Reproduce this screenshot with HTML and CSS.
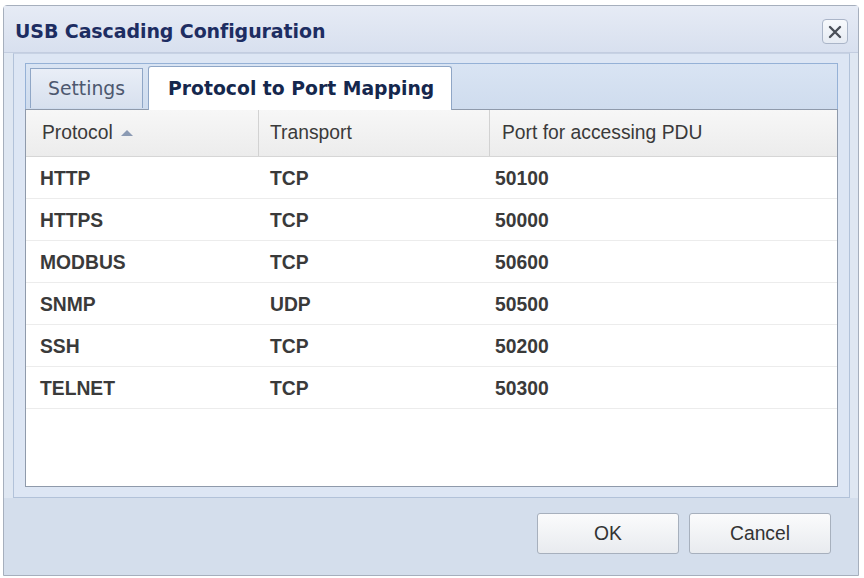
FILE: index.html
```html
<!DOCTYPE html>
<html>
<head>
<meta charset="utf-8">
<link rel="stylesheet" href="styles.css">
</head>
<body>
<div class="window">
  <div class="titlebar">
    <span class="title">USB Cascading Configuration</span>
    <span class="close"><svg width="16" height="16" viewBox="0 0 16 16"><path d="M3 3 L13 13 M13 3 L3 13" stroke="#4a4f58" stroke-width="2.4" stroke-linecap="round"/></svg></span>
  </div>
  <div class="body">
    <div class="panel">
      <div class="tabstrip">
        <div class="tab">Settings</div>
        <div class="tab active">Protocol to Port Mapping</div>
      </div>
      <div class="grid">
        <div class="row head">
          <div class="c c1">Protocol <span class="arrow"></span></div>
          <div class="c c2">Transport</div>
          <div class="c c3">Port for accessing PDU</div>
        </div>
        <div class="row"><div class="c c1">HTTP</div><div class="c c2">TCP</div><div class="c c3">50100</div></div>
        <div class="row"><div class="c c1">HTTPS</div><div class="c c2">TCP</div><div class="c c3">50000</div></div>
        <div class="row"><div class="c c1">MODBUS</div><div class="c c2">TCP</div><div class="c c3">50600</div></div>
        <div class="row"><div class="c c1">SNMP</div><div class="c c2">UDP</div><div class="c c3">50500</div></div>
        <div class="row"><div class="c c1">SSH</div><div class="c c2">TCP</div><div class="c c3">50200</div></div>
        <div class="row"><div class="c c1">TELNET</div><div class="c c2">TCP</div><div class="c c3">50300</div></div>
      </div>
    </div>
    <div class="footer">
      <button class="btn">OK</button>
      <button class="btn">Cancel</button>
    </div>
  </div>
</div>
</body>
</html>
```
FILE: styles.css
```css
html, body { margin: 0; padding: 0; background: #ffffff; }
body { width: 864px; height: 578px; overflow: hidden; }
.window {
  margin: 5px 3px 0 3px;
  width: 856px;
  height: 571px;
  border: 1px solid #a6afbd;
  border-radius: 4px 4px 0 0;
  background: #dfe7f2;
  display: flex;
  flex-direction: column;
  box-sizing: border-box;
}
.titlebar {
  height: 47px;
  flex: none;
  display: flex;
  align-items: center;
  justify-content: space-between;
  padding: 0 10px 0 11px;
  background: linear-gradient(#e6ebf5, #d8e0ef);
  border-bottom: 1px solid #c3cde0;
  box-sizing: border-box;
}
.title {
  font-family: "DejaVu Sans", sans-serif;
  font-weight: bold;
  font-size: 19px;
  color: #1d2d62;
  letter-spacing: -0.1px;
  margin-top: 4px;
}
.close {
  width: 26px; height: 25px;
  box-sizing: border-box;
  border: 1px solid #aab5c8;
  border-radius: 4px;
  background: linear-gradient(#f7f9fc, #e6ebf3);
  display: flex; align-items: center; justify-content: center;
  margin-top: 5px;
}
.body { flex: 1; display: flex; flex-direction: column; }
.panel {
  margin: 0 8px 0 9px;
  height: 445px;
  border: 1px solid #b2c2d9;
  border-top-color: #c7d2e4;
  background: #dde6f4;
  padding: 9px 11px 10px 11px;
  box-sizing: border-box;
  display: flex;
  flex-direction: column;
}
.tabstrip {
  height: 46px;
  flex: none;
  border: 1px solid #95b1d6;
  border-bottom: none;
  background: linear-gradient(#d9e4f3, #cfdcee);
  display: flex;
  align-items: flex-end;
  padding-left: 4px;
  gap: 5px;
  box-sizing: border-box;
}
.tab {
  font-family: "DejaVu Sans", sans-serif;
  font-size: 18.8px;
  height: 40px;
  box-sizing: border-box;
  display: flex; align-items: center;
  padding: 0 17px 0 17px;
  border: 1px solid #8fa6c6;
  border-bottom: none;
  background: linear-gradient(#e9eef7, #d7e0ee);
  color: #4d586f;
  margin-bottom: 1px;
}
.tab.active {
  height: 44px;
  margin-bottom: -1px;
  background: #ffffff;
  color: #15274d;
  font-weight: bold;
  padding: 0 17px 0 19px;
  border-radius: 3px 3px 0 0;
  border-color: #8fa6c6;
  position: relative;
  z-index: 1;
}
.grid {
  flex: 1;
  background: #ffffff;
  border: 1px solid #8f9aab;
  font-family: "Liberation Sans", Arial, sans-serif;
  font-size: 19.3px;
  color: #3a3a3a;
}
.row {
  display: grid;
  grid-template-columns: 232px 231px 1fr;
  height: 42px;
  border-bottom: 1px solid #ececec;
  box-sizing: border-box;
  font-weight: bold;
  padding-top: 3px;
}
.row.head {
  height: 47px;
  padding-top: 0;
  font-weight: normal;
  background: linear-gradient(#f7f7f7, #ececec);
  border-bottom: 1px solid #d6d6d6;
  color: #3a3a3a;
}
.c { display: flex; align-items: center; white-space: nowrap; }
.row .c1 { padding-left: 14px; }
.row .c2 { padding-left: 12px; }
.row .c3 { padding-left: 6px; }
.head .c1 { padding-left: 16px; }
.head .c2 { border-left: 1px solid #d2d2d2; padding-left: 11px; }
.head .c3 { border-left: 1px solid #d2d2d2; padding-left: 12px; }
.arrow {
  display: inline-block;
  width: 0; height: 0;
  margin-left: 8px;
  border-left: 6px solid transparent;
  border-right: 6px solid transparent;
  border-bottom: 6px solid #8b9ab3;
}
.footer {
  flex: 1;
  background: #d4deec;
  display: flex;
  justify-content: flex-end;
  align-items: flex-start;
  padding: 15px 27px 0 0;
  gap: 10px;
}
.btn {
  width: 142px;
  height: 41px;
  border: 1px solid #a7b0bd;
  border-radius: 3px;
  background: linear-gradient(#fbfbfc, #e8ebef);
  font-family: "Liberation Sans", Arial, sans-serif;
  font-size: 19.3px;
  color: #333333;
  padding: 0;
}
```
